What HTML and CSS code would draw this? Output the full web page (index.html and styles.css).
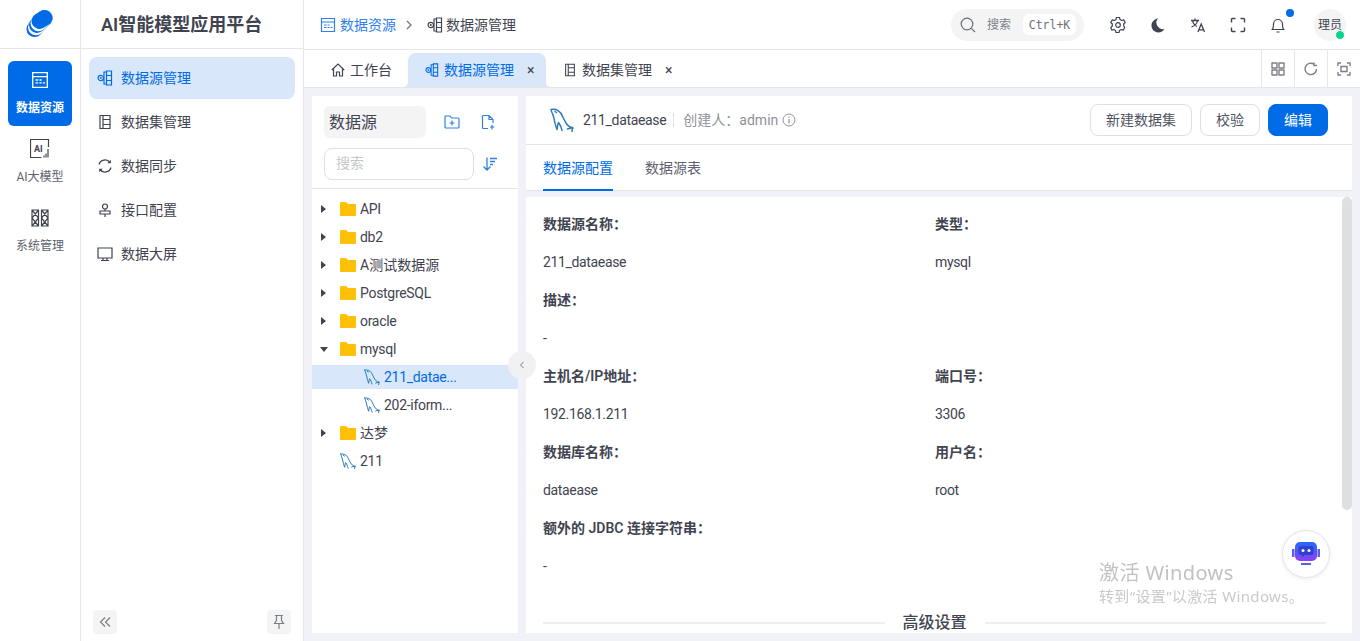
FILE: index.html
```html
<!DOCTYPE html>
<html lang="zh-CN">
<head>
  <meta charset="UTF-8">
  <title>数据源管理</title>
  <link rel="stylesheet" href="styles.css">
</head>
<body>
  <svg class="sprite">
    <symbol id="i-table" viewBox="0 0 16 16"><path d="M1.500 1.500h13v13h-13zM1.500 5h13M4 8h2.500M7.500 8h2M4 10.500h2.500M7.500 10.500h2M10.500 10.500h2" fill="none" stroke="currentColor" stroke-width="1.200"/></symbol>
    <symbol id="i-source" viewBox="0 0 16 16"><path d="M9.500 1h5v14h-5zM9.500 5.500h5M9.500 10.500h5M9 2H7v12h2M6.500 8H7" fill="none" stroke="currentColor" stroke-width="1.200"/><circle cx="3.800" cy="8" r="2.700" fill="none" stroke="currentColor" stroke-width="1.200"/><circle cx="3.800" cy="8" r="1" fill="currentColor"/></symbol>
    <symbol id="i-list" viewBox="0 0 16 16"><path d="M3 1.500h10v13H3zM6 1.500v13M6 5.500h7M6 10.500h7" fill="none" stroke="currentColor" stroke-width="1.200"/></symbol>
    <symbol id="i-mysql" viewBox="0 0 24 24"><path d="M1 1.500C5 .5 9 2.500 11 5.500c2 3 3 7 6 11 1.500 2 4 3 6 3.500M1 1.500c.5 3 2.500 5.500 3 9 .5 3 1.500 7 3 11 .5-3 .5-5 1.500-7 1.500 2 3 5 3.500 8M17.500 21l5-1.500-.5 4M5 3.500l1.500 1" fill="none" stroke="currentColor" stroke-width="1.500" stroke-linejoin="round" stroke-linecap="round"/></symbol>
    <symbol id="i-folder" viewBox="0 0 16 14"><path d="M0 1a1 1 0 0 1 1-1h5l2 2h7a1 1 0 0 1 1 1v10a1 1 0 0 1-1 1H1a1 1 0 0 1-1-1z" fill="#ffc107"/></symbol>
  </svg>

  <div class="app">
    <aside class="rail">
      <div class="rail-logo">
        <svg width="28" height="28" viewBox="0 0 28 28" fill="none" stroke-linecap="round" stroke-width="16">
          <path d="M18.500 8L8.500 19" stroke="#006be6"/>
          <path d="M18.500 8L10 17.300" stroke="#fff"/>
          <path d="M18.500 8L11 15" stroke="#006be6"/>
          <path d="M18.500 8L12.500 13.300" stroke="#fff"/>
          <path d="M18.500 8L13.500 11" stroke="#006be6"/>
        </svg>
      </div>
      <nav class="rail-nav">
        <a class="rail-item active">
          <svg width="18" height="18"><use href="#i-table"/></svg>
          <span>数据资源</span>
        </a>
        <a class="rail-item">
          <svg class="rail-ai-icon" width="20" height="20" viewBox="0 0 20 20">
            <path d="M18.500 8V.5H.5v18h11" fill="none" stroke="currentColor" stroke-width="1.200"/>
            <path d="M14 18.500v-2M16 18.500v-4M18 18.500V10" stroke="currentColor" stroke-width="1.200"/>
            <text x="4" y="12.500" class="rail-ai">AI</text>
          </svg>
          <span>AI大模型</span>
        </a>
        <a class="rail-item">
          <svg width="18" height="18" viewBox="0 0 18 18">
            <path d="M1 1h6.500v16H1zM10.500 1H17v16h-6.500zM1 1l6.500 8L1 17M7.500 1L1 9l6.500 8M10.500 1L17 9l-6.500 8M17 1l-6.500 8 6.500 8" fill="none" stroke="currentColor" stroke-width="1.200"/>
          </svg>
          <span>系统管理</span>
        </a>
      </nav>
    </aside>

    <aside class="menu">
      <div class="menu-title">AI智能模型应用平台</div>
      <nav class="menu-list">
        <a class="menu-item active"><svg width="16" height="16"><use href="#i-source"/></svg>数据源管理</a>
        <a class="menu-item"><svg width="16" height="16"><use href="#i-list"/></svg>数据集管理</a>
        <a class="menu-item">
          <svg width="16" height="16" viewBox="0 0 16 16"><path d="M2 6.500A6.200 6.200 0 0 1 13 4.500M14 9.500A6.200 6.200 0 0 1 3 11.500" fill="none" stroke="currentColor" stroke-width="1.300"/><path d="M13.800 1.800v3.500h-3.500M2.200 14.200v-3.500h3.500" fill="currentColor"/></svg>
          数据同步
        </a>
        <a class="menu-item">
          <svg width="16" height="16" viewBox="0 0 16 16"><circle cx="8" cy="4.500" r="2.500" fill="none" stroke="currentColor" stroke-width="1.200"/><path d="M3 9h10v3H3zM8 7v2M8 12v3" fill="none" stroke="currentColor" stroke-width="1.200"/></svg>
          接口配置
        </a>
        <a class="menu-item">
          <svg width="16" height="16" viewBox="0 0 16 16"><path d="M1 2h14v10H1zM6 12v2.500M10 12v2.500M4 14.500h8" fill="none" stroke="currentColor" stroke-width="1.200"/></svg>
          数据大屏
        </a>
      </nav>
      <div class="menu-foot">
        <button class="foot-btn">
          <svg width="14" height="14" viewBox="0 0 14 14"><path d="M7 2.500L2.500 7 7 11.500M12 2.500L7.500 7 12 11.500" fill="none" stroke="currentColor" stroke-width="1.200"/></svg>
        </button>
        <button class="foot-btn">
          <svg width="14" height="16" viewBox="0 0 14 16"><path d="M3 1.500h8M4.500 1.500v5L2.500 9.500h9L9.500 6.500v-5M7 9.500V15" fill="none" stroke="currentColor" stroke-width="1.200"/></svg>
        </button>
      </div>
    </aside>

    <main class="main">
      <header class="topbar">
        <div class="crumbs">
          <svg class="crumb-blue" width="16" height="16"><use href="#i-table"/></svg>
          <span class="crumb-blue crumb-first">数据资源</span>
          <svg class="crumb-sep" width="10" height="10" viewBox="0 0 10 10"><path d="M3 1l4 4-4 4" fill="none" stroke="currentColor" stroke-width="1.200"/></svg>
          <svg width="16" height="16"><use href="#i-source"/></svg>
          <span>数据源管理</span>
        </div>
        <div class="search">
          <svg width="16" height="16" viewBox="0 0 16 16"><circle cx="7" cy="7" r="5.800" fill="none" stroke="currentColor" stroke-width="1.200"/><path d="M11.300 11.300L15 15" stroke="currentColor" stroke-width="1.200"/></svg>
          <span class="search-text">搜索</span>
          <kbd class="search-key">Ctrl+K</kbd>
        </div>
        <div class="tools">
          <svg width="16" height="16" viewBox="0 0 16 16"><path d="M6.500 1h3l.5 2 1.700 1 2-.6 1.500 2.600-1.500 1.500v2L14.700 11l-1.500 2.600-2-.6-1.700 1-.5 2h-3l-.5-2-1.700-1-2 .6L.8 11l1.500-1.500v-2L.8 6l1.500-2.600 2 .6L6 3z" transform="translate(0 -.5)" fill="none" stroke="currentColor" stroke-width="1.200" stroke-linejoin="round"/><circle cx="8" cy="8" r="2.300" fill="none" stroke="currentColor" stroke-width="1.200"/></svg>
          <svg width="16" height="16" viewBox="0 0 16 16"><path d="M8.500 1.500A7 7 0 1 0 15 12a6.500 6.500 0 0 1-6.500-10.500z" fill="#3f4450" transform="translate(-.5 0)"/></svg>
          <svg width="16" height="16" viewBox="0 0 16 16"><path d="M1 3.500h8M5 1.500v2M2.500 3.500c.5 3 2.500 5 4.500 6M7.500 3.500c-.5 3-3 5.500-6 6.500M8 15l3.200-8L14.500 15M9 12.800h4.500" fill="none" stroke="currentColor" stroke-width="1.300"/></svg>
          <svg width="16" height="16" viewBox="0 0 16 16"><path d="M1.500 5.500V2.500a1 1 0 0 1 1-1h3M10.500 1.500h3a1 1 0 0 1 1 1v3M14.500 10.500v3a1 1 0 0 1-1 1h-3M5.500 14.500h-3a1 1 0 0 1-1-1v-3" fill="none" stroke="currentColor" stroke-width="1.400"/></svg>
          <span class="bell">
            <svg width="16" height="16" viewBox="0 0 16 16"><path d="M2 12.500c1.500-1 1.500-3 1.500-5.500a4.500 4.500 0 0 1 9 0c0 2.500 0 4.500 1.500 5.500zM6.500 15h3" fill="none" stroke="currentColor" stroke-width="1.200" stroke-linejoin="round"/></svg>
            <i class="bell-dot"></i>
          </span>
        </div>
        <div class="avatar">理员<i class="avatar-dot"></i></div>
      </header>

      <div class="tabbar">
        <a class="tab tab-home">
          <svg width="14" height="14" viewBox="0 0 14 14"><path d="M.8 7L7 1l6.200 6M2.500 6v7H5.500V9h3v4h3V6" fill="none" stroke="currentColor" stroke-width="1.200"/></svg>
          工作台
        </a>
        <a class="tab tab-active">
          <svg width="14" height="14" viewBox="0 0 16 16"><use href="#i-source"/></svg>
          数据源管理
          <span class="tab-x">×</span>
        </a>
        <a class="tab">
          <svg width="14" height="14" viewBox="0 0 16 16"><use href="#i-list"/></svg>
          数据集管理
          <span class="tab-x">×</span>
        </a>
        <div class="tab-tools">
          <span class="tab-tool">
            <svg width="14" height="14" viewBox="0 0 14 14"><path d="M1 1h5v5H1zM8 1h5v5H8zM1 8h5v5H1zM8 8h5v5H8z" fill="none" stroke="currentColor" stroke-width="1.400" stroke-linejoin="round"/></svg>
          </span>
          <span class="tab-tool">
            <svg width="14" height="14" viewBox="0 0 14 14"><path d="M12.500 7A5.700 5.700 0 1 1 10 2.200M10 .5v3h3" fill="none" stroke="currentColor" stroke-width="1.400"/></svg>
          </span>
          <span class="tab-tool">
            <svg width="14" height="14" viewBox="0 0 14 14"><path d="M1 4V1h3M10 1h3v3M13 10v3h-3M4 13H1v-3" fill="none" stroke="currentColor" stroke-width="1.400"/><path d="M4 4.500h6v5H4z" fill="none" stroke="currentColor" stroke-width="1.400"/></svg>
          </span>
        </div>
      </div>

      <div class="workspace">
        <section class="tree-panel">
          <div class="tree-head">
            <div class="tree-title">数据源</div>
            <svg width="16" height="16" viewBox="0 0 16 16"><path d="M1 3a1 1 0 0 1 1-1h4l1.500 2H14a1 1 0 0 1 1 1v8a1 1 0 0 1-1 1H2a1 1 0 0 1-1-1zM8 6.500v5M5.500 9h5" fill="none" stroke="currentColor" stroke-width="1.200"/></svg>
            <svg width="16" height="16" viewBox="0 0 16 16"><path d="M8 14.500H3.500a1 1 0 0 1-1-1v-11a1 1 0 0 1 1-1H9l4 4V9M9 1.500v4h4M12 11v4.500M10 13h4.500" fill="none" stroke="currentColor" stroke-width="1.200"/></svg>
          </div>
          <div class="tree-search">
            <div class="tree-input">搜索</div>
            <svg width="16" height="16" viewBox="0 0 16 16"><path d="M5 1.500V14M1.500 10.500L5 14l3.500-3.500M8 2.500h7M8 5.500h5M8 8.500h3" fill="none" stroke="currentColor" stroke-width="1.300"/></svg>
          </div>
          <ul class="tree">
            <li class="tree-row"><i class="caret"></i><svg class="tree-icon" width="16" height="14"><use href="#i-folder"/></svg>API</li>
            <li class="tree-row"><i class="caret"></i><svg class="tree-icon" width="16" height="14"><use href="#i-folder"/></svg>db2</li>
            <li class="tree-row zh"><i class="caret"></i><svg class="tree-icon" width="16" height="14"><use href="#i-folder"/></svg>A测试数据源</li>
            <li class="tree-row"><i class="caret"></i><svg class="tree-icon" width="16" height="14"><use href="#i-folder"/></svg>PostgreSQL</li>
            <li class="tree-row"><i class="caret"></i><svg class="tree-icon" width="16" height="14"><use href="#i-folder"/></svg>oracle</li>
            <li class="tree-row"><i class="caret open"></i><svg class="tree-icon" width="16" height="14"><use href="#i-folder"/></svg>mysql</li>
            <li class="tree-row child selected"><svg class="tree-icon db" width="16" height="16"><use href="#i-mysql"/></svg>211_datae...</li>
            <li class="tree-row child"><svg class="tree-icon db" width="16" height="16"><use href="#i-mysql"/></svg>202-iform...</li>
            <li class="tree-row zh"><i class="caret"></i><svg class="tree-icon" width="16" height="14"><use href="#i-folder"/></svg>达梦</li>
            <li class="tree-row leaf"><svg class="tree-icon db" width="16" height="16"><use href="#i-mysql"/></svg>211</li>
          </ul>
          <button class="collapse">
            <svg width="8" height="8" viewBox="0 0 8 8"><path d="M5.500 1L2.500 4l3 3" fill="none" stroke="currentColor" stroke-width="1"/></svg>
          </button>
        </section>

        <section class="detail">
          <div class="detail-head">
            <svg class="db" width="24" height="24"><use href="#i-mysql"/></svg>
            <span class="detail-name">211_dataease</span>
            <span class="detail-owner">创建人：admin</span>
            <svg class="detail-info" width="14" height="14" viewBox="0 0 14 14"><circle cx="7" cy="7" r="6" fill="none" stroke="currentColor"/><path d="M7 6v4.500M7 3.500v1.300" stroke="currentColor" stroke-width="1.200"/></svg>
            <div class="detail-actions">
              <button class="btn">新建数据集</button>
              <button class="btn btn-check">校验</button>
              <button class="btn btn-primary">编辑</button>
            </div>
          </div>
          <div class="detail-tabs">
            <a class="detail-tab active">数据源配置</a>
            <a class="detail-tab">数据源表</a>
          </div>
          <div class="detail-body">
            <div class="fields">
              <div class="field-label">数据源名称：</div>
              <div class="field-label">类型：</div>
              <div class="field-value">211_dataease</div>
              <div class="field-value">mysql</div>
              <div class="field-label wide">描述：</div>
              <div class="field-value wide">-</div>
              <div class="field-label">主机名/IP地址：</div>
              <div class="field-label">端口号：</div>
              <div class="field-value">192.168.1.211</div>
              <div class="field-value">3306</div>
              <div class="field-label">数据库名称：</div>
              <div class="field-label">用户名：</div>
              <div class="field-value">dataease</div>
              <div class="field-value">root</div>
              <div class="field-label wide">额外的 JDBC 连接字符串：</div>
              <div class="field-value wide">-</div>
            </div>
            <div class="divider"><span>高级设置</span></div>
            <i class="scroll-thumb"></i>
          </div>
          <button class="chat">
            <svg width="28" height="24" viewBox="0 0 28 24">
              <defs><linearGradient id="chat-g" x1="0" y1="0" x2="0" y2="1"><stop offset="0" stop-color="#1f6bff"/><stop offset="1" stop-color="#9040f0"/></linearGradient></defs>
              <path d="M0 7h2.500v8H0zM25.500 7H28v8h-2.500z" fill="#5b5cf0"/>
              <rect x="3" y="0" width="22" height="19" rx="5" fill="url(#chat-g)"/>
              <path d="M9 4h10a2.500 2.500 0 0 1 2.500 2.500v4A2.500 2.500 0 0 1 19 13h-6l-3 2v-2H9a2.500 2.500 0 0 1-2.500-2.500v-4A2.500 2.500 0 0 1 9 4z" fill="#2f3fd0"/>
              <path d="M9 21h10v2H9z" fill="#5a5cf0"/>
              <circle cx="11" cy="8.500" r="1.500" fill="#fff"/><circle cx="17" cy="8.500" r="1.500" fill="#fff"/>
            </svg>
          </button>
        </section>
      </div>
    </main>
  </div>

  <div class="watermark">
    <div class="wm-big">激活 Windows</div>
    <div class="wm-small">转到“设置”以激活 Windows。</div>
  </div>
</body>
</html>
```

FILE: styles.css
```css
* {
  box-sizing: border-box;
}

html, body {
  margin: 0;
  height: 100%;
  overflow: hidden;
}

body {
  font-family: Roboto, "Noto Sans CJK SC", sans-serif;
  font-size: 14px;
  line-height: 20px;
  color: #3f4450;
  background: #fff;
}

button {
  font: inherit;
  cursor: pointer;
}

.sprite {
  display: none;
}

.app {
  display: flex;
  height: 641px;
}

/* Left rail */
.rail {
  width: 81px;
  flex: none;
  border-right: 1px solid #e5e6e8;
}

.rail-logo {
  height: 49px;
  border-bottom: 1px solid #e5e6e8;
  display: flex;
  align-items: center;
  justify-content: center;
}

.rail-nav {
  padding: 12px 8px 0;
  display: flex;
  flex-direction: column;
  gap: 4px;
}

.rail-item {
  height: 65px;
  border-radius: 6px;
  display: flex;
  flex-direction: column;
  align-items: center;
  font-size: 12px;
  color: #5d626d;
  padding-top: 10px;
  gap: 9px;
  line-height: 20px;
}

.rail-item svg {
  color: #3f4450;
}

.rail-item .rail-ai-icon {
  margin: -1px 0;
}

.rail-item.active {
  background: #006be6;
  color: #fff;
  font-weight: 700;
}

.rail-item.active svg {
  color: #fff;
}

.rail-ai {
  font: 700 9px Roboto, sans-serif;
  fill: currentColor;
}

/* Second column menu */
.menu {
  width: 223px;
  flex: none;
  border-right: 1px solid #e5e6e8;
  display: flex;
  flex-direction: column;
}

.menu-title {
  height: 49px;
  border-bottom: 1px solid #e5e6e8;
  padding-left: 20px;
  font-size: 18px;
  font-weight: 600;
  line-height: 49px;
}

.menu-list {
  padding: 8px 8px 0;
  display: flex;
  flex-direction: column;
  gap: 2px;
  flex: 1;
}

.menu-item {
  height: 42px;
  border-radius: 8px;
  display: flex;
  align-items: center;
  padding-left: 8px;
  gap: 8px;
}

.menu-item.active {
  background: #d9e7fa;
  color: #006be6;
}

.menu-foot {
  display: flex;
  justify-content: space-between;
  padding: 0 12px 7px;
}

.foot-btn {
  width: 24px;
  height: 24px;
  border: none;
  border-radius: 4px;
  background: #f4f4f5;
  color: #7a7e87;
  padding: 0;
  display: flex;
  align-items: center;
  justify-content: center;
}

/* Main column */
.main {
  flex: 1;
  min-width: 0;
  display: flex;
  flex-direction: column;
  background: #f0f2f7;
}

.topbar {
  height: 50px;
  flex: none;
  background: #fff;
  border-bottom: 1px solid #e5e6e8;
  display: flex;
  align-items: center;
  padding: 0 14px 0 16px;
}

.crumbs {
  display: flex;
  align-items: center;
  flex: 1;
}

.crumb-blue {
  color: #2f80e8;
}

.crumb-first {
  margin-left: 4px;
}

.crumb-sep {
  color: #6b6f78;
  margin: 0 13px 0 8px;
}

.crumbs span:last-child {
  margin-left: 3px;
}

.search {
  width: 133px;
  height: 32px;
  border-radius: 16px;
  background: #f4f4f5;
  display: flex;
  align-items: center;
  padding: 0 8px 0 9px;
  color: #6b6f78;
  margin-right: 26px;
}

.search-text {
  font-size: 12px;
  margin: 1px 0 0 11px;
  color: #7d8088;
}

.search-key {
  margin-left: 12px;
  width: 53px;
  height: 21px;
  background: #fff;
  border-radius: 6px;
  font: 11.500px/22px "DejaVu Sans Mono", monospace;
  color: #6b6f78;
  text-align: center;
}

.tools {
  display: flex;
  align-items: center;
  gap: 24px;
  margin-right: 28px;
}

.bell {
  position: relative;
  display: flex;
}

.bell-dot {
  position: absolute;
  top: -8px;
  right: -8px;
  width: 8px;
  height: 8px;
  border-radius: 50%;
  background: #006be6;
}

.avatar {
  width: 32px;
  height: 32px;
  border-radius: 50%;
  background: #f4f4f5;
  font-size: 12px;
  line-height: 33px;
  text-align: center;
  position: relative;
  white-space: nowrap;
}

.avatar-dot {
  position: absolute;
  right: 1px;
  bottom: 1px;
  width: 10px;
  height: 10px;
  border-radius: 50%;
  background: #05d68b;
  border: 1px solid #fff;
}

/* Tabs */
.tabbar {
  height: 38px;
  flex: none;
  background: #fff;
  border-bottom: 1px solid #e5e6e8;
  display: flex;
  align-items: flex-end;
  padding-left: 27px;
}

.tab {
  height: 34px;
  display: flex;
  align-items: center;
  gap: 5px;
  margin-right: 16px;
  white-space: nowrap;
}

.tab-home {
  margin-right: 16px;
}

.tab-active {
  width: 138px;
  background: #d9e7fa;
  color: #006be6;
  border-radius: 8px 8px 0 0;
  padding-left: 17px;
  margin-right: 17px;
  position: relative;
}

.tab-active::before,
.tab-active::after {
  content: "";
  position: absolute;
  bottom: 0;
  width: 5px;
  height: 5px;
}

.tab-active::before {
  left: -5px;
  background: radial-gradient(circle at 0 0, transparent 5px, #d9e7fa 5px);
}

.tab-active::after {
  right: -5px;
  background: radial-gradient(circle at 100% 0, transparent 5px, #d9e7fa 5px);
}

.tab-x {
  font-size: 14px;
  color: #3f4450;
  margin-left: 8px;
}

.tab-tools {
  margin-left: auto;
  display: flex;
  height: 37px;
  align-self: flex-start;
}

.tab-tool {
  width: 33px;
  border-left: 1px solid #e5e6e8;
  display: flex;
  align-items: center;
  justify-content: center;
  color: #7d8088;
}

.workspace {
  flex: 1;
  min-height: 0;
  display: flex;
  gap: 8px;
  padding: 8px;
}

/* Tree panel */
.tree-panel {
  width: 206px;
  flex: none;
  background: #fff;
  position: relative;
  z-index: 1;
}

.tree-head {
  display: flex;
  align-items: center;
  padding: 10px 0 0 12px;
  color: #2f80e8;
}

.tree-head svg:last-child {
  margin-left: 20px;
}

.tree-head svg:nth-child(2) {
  margin-left: 18px;
}

.tree-title {
  width: 102px;
  height: 32px;
  border-radius: 6px;
  background: #f4f4f5;
  color: #3f4450;
  font-size: 16px;
  line-height: 33px;
  padding-left: 5px;
}

.tree-search {
  display: flex;
  align-items: center;
  gap: 8px;
  margin-top: 10px;
  padding: 0 0 8px 12px;
  border-bottom: 1px solid #e5e6e8;
  color: #2f80e8;
}

.tree-input {
  width: 150px;
  height: 32px;
  border: 1px solid #dcdfe6;
  border-radius: 8px;
  color: #c4c7cc;
  line-height: 28px;
  padding-left: 11px;
}

.tree {
  list-style: none;
  margin: 8px 0 0;
  padding: 0;
}

.tree-row {
  height: 24px;
  margin-bottom: 4px;
  display: flex;
  align-items: center;
  padding-left: 9px;
  gap: 4px;
  letter-spacing: -0.3px;
}

.tree-row.zh {
  letter-spacing: 0;
}

.tree-row.child {
  padding-left: 52px;
}

.tree-row.leaf {
  padding-left: 28px;
}

.tree-row.selected {
  background: #d9e7fa;
  color: #006be6;
}

.tree-icon {
  flex: none;
}

.db {
  color: #2a7bb5;
  flex: none;
}

.caret {
  width: 0;
  height: 0;
  border-style: solid;
  border-width: 4px 0 4px 5px;
  border-color: transparent transparent transparent #3f4450;
  margin-right: 10px;
  flex: none;
}

.caret.open {
  border-width: 5px 4px 0 4px;
  border-color: #3f4450 transparent transparent transparent;
  margin-left: -1px;
  margin-right: 8px;
}

.collapse {
  position: absolute;
  top: 255px;
  right: -18px;
  width: 28px;
  height: 28px;
  border: none;
  border-radius: 50%;
  background: #f1f1f3;
  color: #7a7e87;
  padding: 0;
  display: flex;
  align-items: center;
  justify-content: center;
}

/* Detail panel */
.detail {
  flex: 1;
  min-width: 0;
  display: flex;
  flex-direction: column;
  position: relative;
}

.detail-head {
  height: 49px;
  flex: none;
  background: #fff;
  border-bottom: 1px solid #e5e6e8;
  display: flex;
  align-items: center;
  padding: 0 24px;
}

.detail-name {
  margin-left: 9px;
  padding-right: 8px;
  position: relative;
  letter-spacing: -0.33px;
}

.detail-name::after {
  content: "";
  position: absolute;
  right: 0;
  top: 3px;
  height: 14px;
  border-right: 1px solid #dcdfe6;
}

.detail-owner {
  margin-left: 9px;
  color: #8f9299;
}

.detail-info {
  margin-left: 4px;
  color: #8f9299;
}

.detail-actions {
  margin-left: auto;
  display: flex;
  gap: 8px;
  margin-top: -1px;
}

.btn {
  height: 32px;
  width: 102px;
  border: 1px solid #dcdfe6;
  border-radius: 8px;
  background: #fff;
  color: #4f545f;
  padding: 0;
}

.btn-check {
  width: 60px;
}

.btn-primary {
  width: 60px;
  background: #006be6;
  border-color: #006be6;
  color: #fff;
}

.detail-tabs {
  height: 46px;
  flex: none;
  background: #fff;
  border-bottom: 1px solid #e5e6e8;
  display: flex;
  gap: 32px;
  padding-left: 17px;
  margin-bottom: 6px;
}

.detail-tab {
  height: 46px;
  line-height: 46px;
  color: #5d626d;
}

.detail-tab.active {
  color: #006be6;
  border-bottom: 2px solid #006be6;
}

.detail-body {
  flex: 1;
  min-height: 0;
  background: #fff;
  padding: 8px 26px 0 17px;
  position: relative;
  overflow: hidden;
}

.fields {
  display: grid;
  grid-template-columns: 392px 1fr;
  grid-auto-rows: 38px;
  align-items: center;
}

.field-label {
  font-weight: 600;
}

.field-value {
  letter-spacing: -0.35px;
}

.wide {
  grid-column: 1 / -1;
}

.divider {
  display: flex;
  align-items: center;
  gap: 18px;
  margin-top: 28px;
  font-size: 16px;
  font-weight: 500;
}

.divider::before,
.divider::after {
  content: "";
  flex: 1;
  border-top: 2px solid #eeeff1;
}

.scroll-thumb {
  position: absolute;
  top: 0;
  right: 0;
  width: 10px;
  height: 313px;
  border-radius: 5px;
  background: #dedfe1;
}

.chat {
  position: absolute;
  left: 756px;
  top: 434px;
  width: 48px;
  height: 48px;
  border-radius: 50%;
  background: #fff;
  border: 1px solid #e5e6e8;
  box-shadow: 0 1px 4px rgba(0, 0, 0, 0.08);
  padding: 0;
  display: flex;
  align-items: center;
  justify-content: center;
}

.watermark {
  position: fixed;
  left: 1099px;
  top: 558px;
  color: #c2c2c2;
  font-family: "Noto Sans", "Noto Sans CJK SC", sans-serif;
  pointer-events: none;
}

.wm-big {
  font-size: 20px;
  line-height: 29px;
  letter-spacing: 0.4px;
}

.wm-small {
  font-size: 15px;
  line-height: 18px;
  letter-spacing: 0.35px;
  color: #c9c9c9;
}
```
